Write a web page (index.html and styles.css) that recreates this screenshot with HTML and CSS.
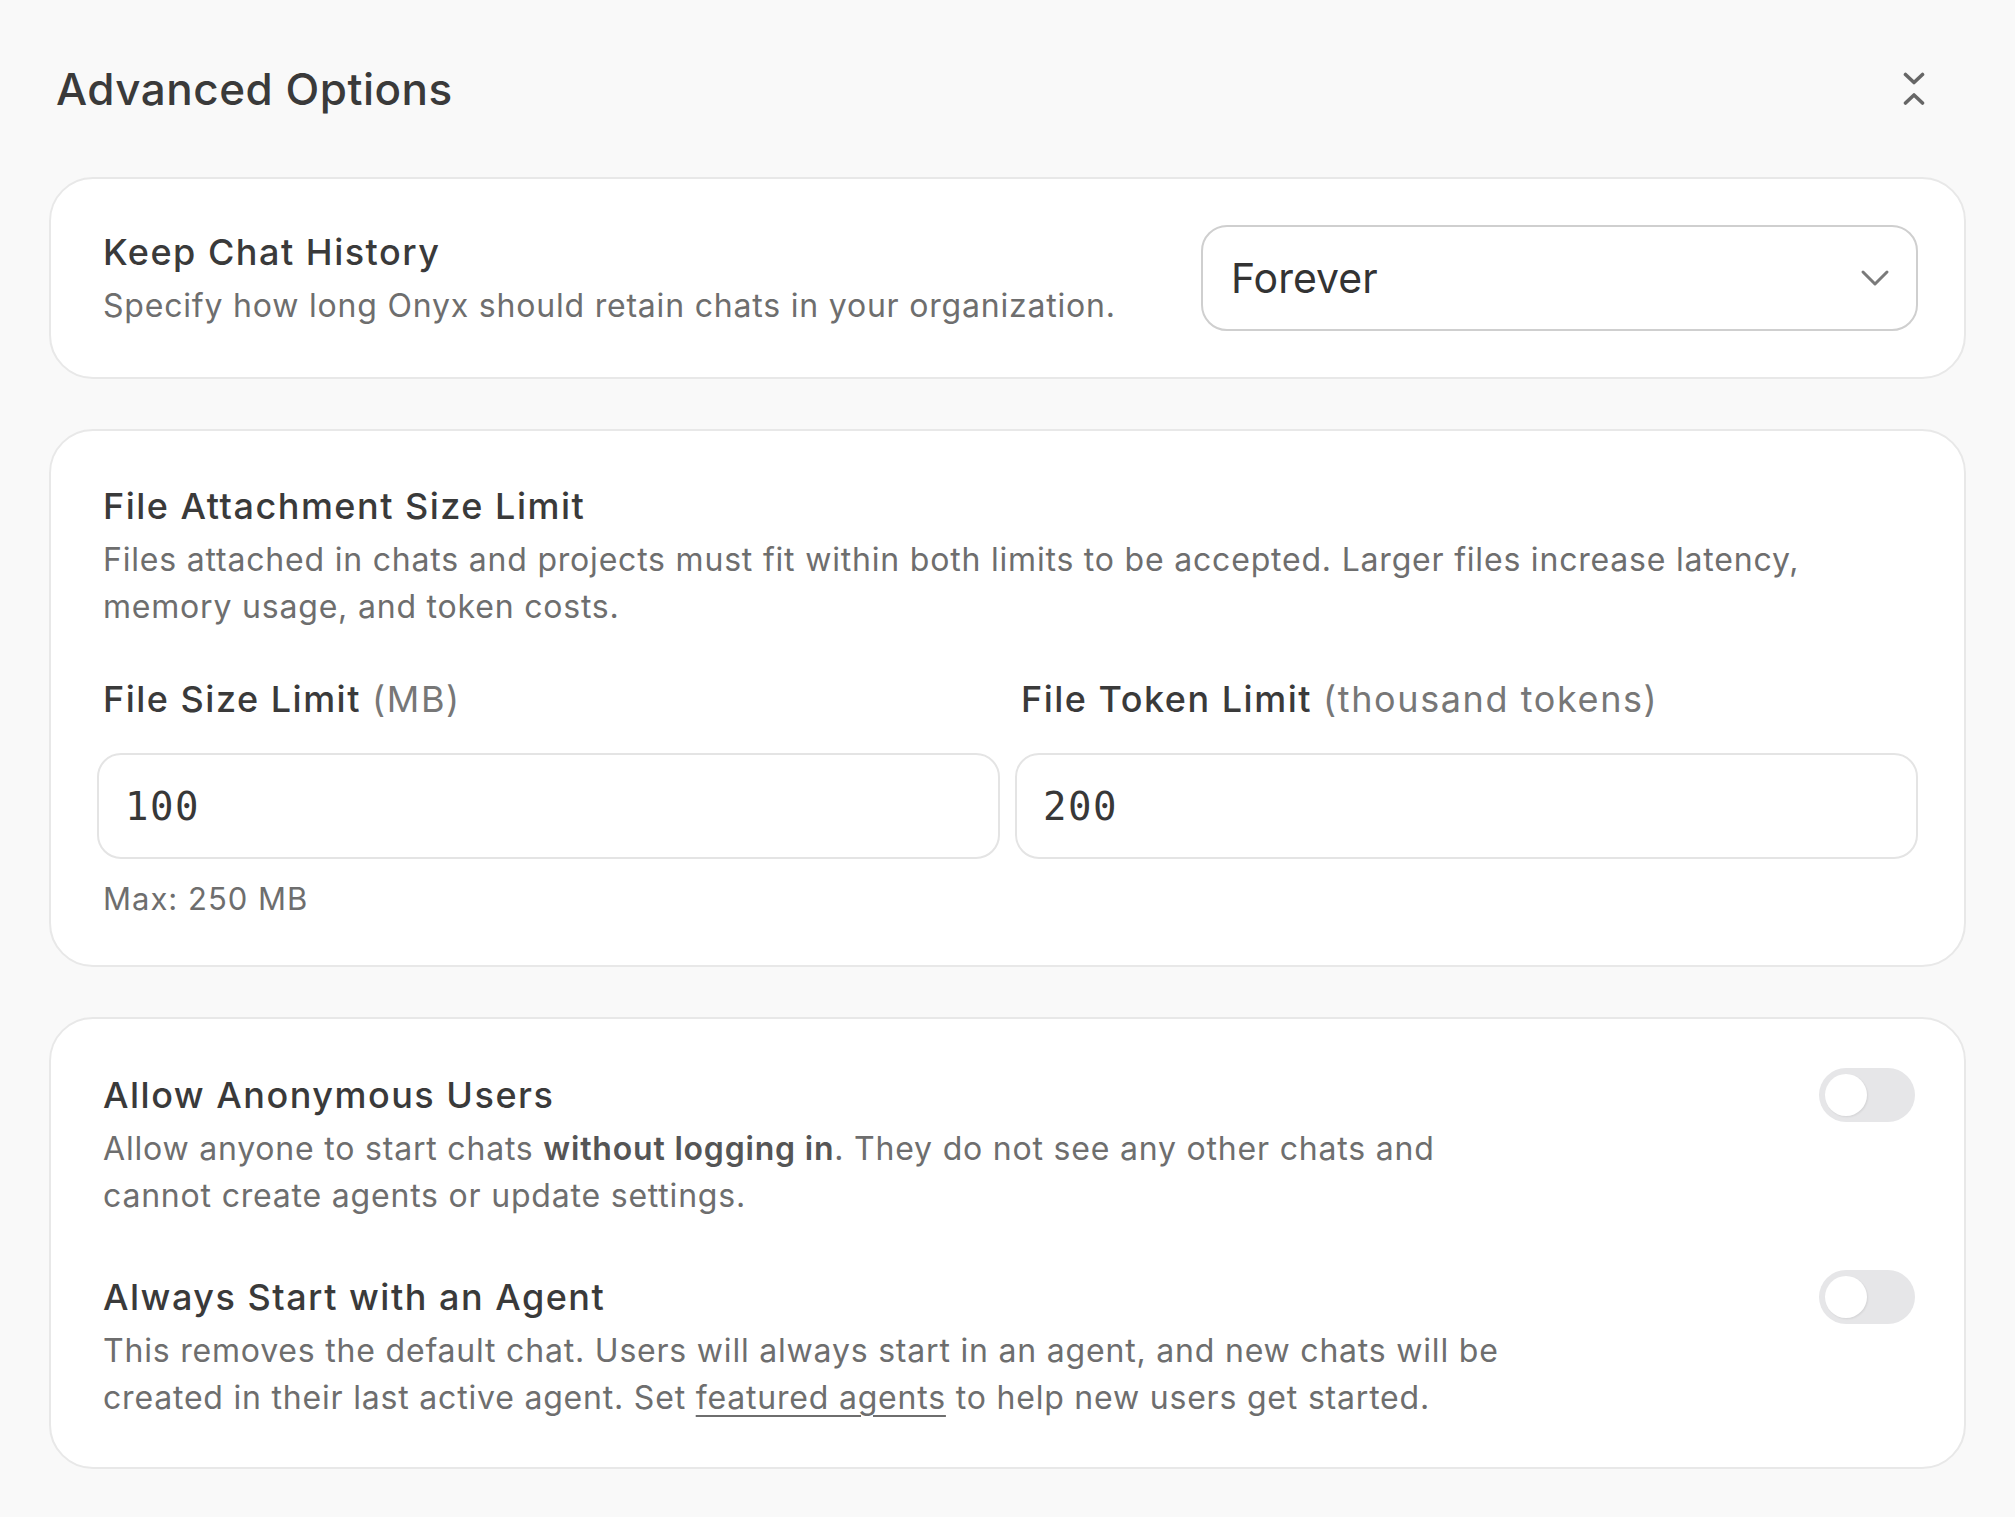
FILE: index.html
```html
<!DOCTYPE html>
<html lang="en">
<head>
<meta charset="utf-8">
<title>Advanced Options</title>
<link rel="stylesheet" href="styles.css">
</head>
<body>
<main class="page">
  <header class="page-header">
    <h1 class="page-title">Advanced Options</h1>
    <button class="collapse-btn" type="button" aria-label="Collapse">
      <svg width="22" height="34" viewBox="0 0 22 34" fill="none" stroke="currentColor" stroke-width="3.6" stroke-linecap="round" stroke-linejoin="round">
        <polyline points="2.5,2.5 11,10.5 19.5,2.5"/>
        <polyline points="2.5,31 11,23 19.5,31"/>
      </svg>
    </button>
  </header>

  <section class="card card-row">
    <div class="setting-text">
      <h2 class="setting-title">Keep Chat History</h2>
      <p class="setting-desc">Specify how long Onyx should retain chats in your organization.</p>
    </div>
    <div class="select">
      <span class="select-value">Forever</span>
      <svg class="select-chevron" width="30" height="18" viewBox="0 0 30 18" fill="none" stroke="currentColor" stroke-width="3" stroke-linecap="round" stroke-linejoin="round">
        <polyline points="3,3 15,15 27,3"/>
      </svg>
    </div>
  </section>

  <section class="card card-limits">
    <div class="setting-text">
      <h2 class="setting-title">File Attachment Size Limit</h2>
      <p class="setting-desc">Files attached in chats and projects must fit within both limits to be accepted. Larger files increase latency, memory usage, and token costs.</p>
    </div>
    <div class="limit-grid">
      <div class="field">
        <label class="field-label">File Size Limit <span class="field-unit">(MB)</span></label>
        <div class="text-input">100</div>
        <div class="field-hint">Max: 250 MB</div>
      </div>
      <div class="field">
        <label class="field-label">File Token Limit <span class="field-unit">(thousand tokens)</span></label>
        <div class="text-input">200</div>
      </div>
    </div>
  </section>

  <section class="card card-toggles">
    <div class="toggle-row">
      <div class="setting-text narrow">
        <h2 class="setting-title">Allow Anonymous Users</h2>
        <p class="setting-desc">Allow anyone to start chats <strong>without logging in</strong>. They do not see any other chats and cannot create agents or update settings.</p>
      </div>
      <span class="switch"><span class="switch-knob"></span></span>
    </div>
    <div class="toggle-row">
      <div class="setting-text narrow">
        <h2 class="setting-title">Always Start with an Agent</h2>
        <p class="setting-desc">This removes the default chat. Users will always start in an agent, and new chats will be created in their last active agent. Set <a class="link" href="#">featured agents</a> to help new users get started.</p>
      </div>
      <span class="switch"><span class="switch-knob"></span></span>
    </div>
  </section>
</main>
</body>
</html>
```

FILE: styles.css
```css
* {
  box-sizing: border-box;
}

body {
  margin: 0;
  background: #f9f9f9;
  font-family: "Inter", "Liberation Sans", sans-serif;
  color: #3a3a3a;
}

.page {
  padding: 0 49px 40px;
}

.page-header {
  height: 177px;
  display: flex;
  align-items: center;
  justify-content: space-between;
  padding-left: 7px;
}

.page-title {
  margin: 0;
  font-size: 44px;
  line-height: 56px;
  font-weight: 500;
  letter-spacing: 0.5px;
  color: #3a3a3a;
}

.collapse-btn {
  border: 0;
  background: none;
  padding: 0;
  margin-right: 41px;
  color: #666;
  display: flex;
}

.card {
  background: #fff;
  border: 2px solid #e8e8e8;
  border-radius: 44px;
  padding: 46px 46px;
  margin-bottom: 50px;
}

.card-row {
  display: flex;
  align-items: center;
  justify-content: space-between;
  gap: 40px;
}

.card-limits {
  padding-top: 51px;
  padding-bottom: 44px;
}

.setting-text {
  padding-left: 6px;
}

.setting-text.narrow {
  max-width: 1430px;
}

.setting-title {
  margin: 0;
  font-size: 36px;
  line-height: 48px;
  font-weight: 540;
  letter-spacing: 1.5px;
  color: #3a3a3a;
}

.setting-desc {
  margin: 6px 0 0;
  font-size: 32px;
  line-height: 47px;
  letter-spacing: 0.8px;
  color: #6e6e6e;
}

.setting-desc strong {
  font-weight: 600;
  color: #555;
}

.link {
  color: #6e6e6e;
  text-decoration: underline;
  text-decoration-thickness: 2px;
  text-underline-offset: 6px;
}

.select {
  width: 717px;
  height: 106px;
  flex: none;
  border: 2px solid #cfcfcf;
  border-radius: 26px;
  display: flex;
  align-items: center;
  justify-content: space-between;
  padding: 0 26px 0 28px;
}

.select-value {
  font-size: 41px;
  color: #333;
}

.select-chevron {
  color: #7a7a7a;
}

.limit-grid {
  display: grid;
  grid-template-columns: 1fr 1fr;
  gap: 15px;
  margin-top: 45px;
}

.field-label {
  display: block;
  padding-left: 6px;
  font-size: 36px;
  line-height: 48px;
  font-weight: 540;
  letter-spacing: 1.5px;
  color: #3a3a3a;
}

.field-unit {
  font-weight: 400;
  letter-spacing: 1.6px;
  color: #777;
}

.text-input {
  margin-top: 30px;
  height: 106px;
  border: 2px solid #e4e4e4;
  border-radius: 24px;
  display: flex;
  align-items: center;
  padding: 0 26px;
  font-family: "DejaVu Sans Mono", "Liberation Mono", monospace;
  font-size: 39px;
  letter-spacing: 1.5px;
  color: #383838;
}

.field-hint {
  margin-top: 18px;
  padding-left: 6px;
  font-size: 31px;
  line-height: 44px;
  letter-spacing: 1px;
  color: #6e6e6e;
}

.card-toggles {
  display: flex;
  flex-direction: column;
  gap: 54px;
  padding-top: 52px;
  padding-bottom: 46px;
}

.toggle-row {
  display: flex;
  justify-content: space-between;
  align-items: flex-start;
}

.switch {
  flex: none;
  width: 96px;
  height: 54px;
  margin-top: -3px;
  margin-right: 3px;
  border-radius: 27px;
  background: #e6e6e8;
  padding: 6px;
  display: flex;
  align-items: center;
}

.switch-knob {
  width: 42px;
  height: 42px;
  border-radius: 50%;
  background: #fff;
  box-shadow: 1px 1px 2px rgba(0, 0, 0, 0.08);
}
```
